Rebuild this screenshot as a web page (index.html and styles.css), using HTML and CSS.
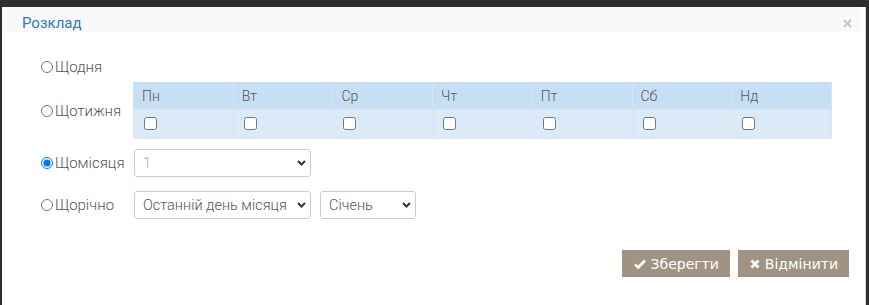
FILE: index.html
```html
<!DOCTYPE html>
<html lang="uk">
<head>
  <meta charset="UTF-8">
  <meta name="viewport" content="width=device-width, initial-scale=1.0">
  <link rel="stylesheet" href="styles.css">
</head>
<body>

  <div class="modal">
    <div class="modal-header">
      <span class="modal-title">Розклад</span>
      <svg class="close" width="9" height="9" viewBox="0 0 9 9"><path d="M1 1 L8 8 M8 1 L1 8" stroke="#c8c8c8" stroke-width="2.4"/></svg>
    </div>

    <form id="scheduleForm" class="modal-body">
      <div class="row row-daily">
        <label class="opt"><input type="radio" name="period" value="daily">Щодня</label>
      </div>

      <div class="row row-weekly">
        <label class="opt"><input type="radio" name="period" value="weekly">Щотижня</label>
        <table class="days">
          <tr>
            <th>Пн</th><th>Вт</th><th>Ср</th><th>Чт</th><th>Пт</th><th>Сб</th><th>Нд</th>
          </tr>
          <tr>
            <td><input type="checkbox"></td>
            <td><input type="checkbox"></td>
            <td><input type="checkbox"></td>
            <td><input type="checkbox"></td>
            <td><input type="checkbox"></td>
            <td><input type="checkbox"></td>
            <td><input type="checkbox"></td>
          </tr>
        </table>
      </div>

      <div class="row row-monthly">
        <label class="opt"><input type="radio" name="period" value="monthly" checked>Щомісяця</label>
        <span class="sel-wrap sel-day">
          <select class="sel muted">
            <option>1</option>
          </select>
          <svg class="chev" width="9" height="6" viewBox="0 0 9 6"><path d="M1 1 L4.5 4.5 L8 1" fill="none" stroke="#333" stroke-width="2"/></svg>
        </span>
      </div>

      <div class="row row-yearly">
        <label class="opt"><input type="radio" name="period" value="yearly">Щорічно</label>
        <span class="sel-wrap sel-day">
          <select class="sel">
            <option>Останній день місяця</option>
          </select>
          <svg class="chev" width="9" height="6" viewBox="0 0 9 6"><path d="M1 1 L4.5 4.5 L8 1" fill="none" stroke="#333" stroke-width="2"/></svg>
        </span>
        <span class="sel-wrap sel-month">
          <select class="sel">
            <option>Січень</option>
          </select>
          <svg class="chev" width="9" height="6" viewBox="0 0 9 6"><path d="M1 1 L4.5 4.5 L8 1" fill="none" stroke="#333" stroke-width="2"/></svg>
        </span>
      </div>

      <div class="footer">
        <button type="button" class="btn">
          <svg class="ico" width="12" height="10" viewBox="0 0 12 10"><path d="M1 5.5 L4.3 8.5 L11 1.5" fill="none" stroke="#fff" stroke-width="2.6"/></svg>Зберегти
        </button>
        <button type="button" class="btn">
          <svg class="ico" width="10" height="10" viewBox="0 0 10 10"><path d="M1.5 1.5 L8.5 8.5 M8.5 1.5 L1.5 8.5" stroke="#fff" stroke-width="2.6"/></svg>Відмінити
        </button>
      </div>
    </form>
  </div>

</body>
</html>
```

FILE: styles.css
```css
html, body {
  margin: 0;
  height: 305px;
}

body {
  background-color: #2d2d2d;
  padding: 2px 3px 3px 2px;
  box-sizing: border-box;
  font-family: Roboto, "Liberation Sans", sans-serif;
  color: #555;
}

.modal {
  background-color: #fff;
  height: 100%;
  border-right: 1px solid #d6d6d6;
}

.modal-header {
  margin: 5px 5px 0 5px;
  height: 18px;
  padding: 7px 15px 0 15px;
  background-color: #f9f9f9;
  display: flex;
  justify-content: space-between;
  align-items: center;
}

.modal-title {
  font-size: 15px;
  color: #337ab7;
}

.close {
  margin-right: -7px;
  margin-top: 1px;
}

.modal-body {
  padding: 23px 16px 0 36px;
}

.row {
  display: flex;
  align-items: center;
}

.row-daily {
  height: 24px;
  margin-bottom: 3px;
}

.row-weekly {
  margin-bottom: 10px;
}

.row-monthly {
  margin-bottom: 14px;
}

.opt {
  width: 95px;
  display: flex;
  align-items: center;
  font-size: 15px;
  font-weight: 300;
  color: #555;
}

.opt input {
  width: 12px;
  height: 12px;
  margin: 0 2px 0 3px;
}

.days {
  width: 699px;
  border-collapse: collapse;
  table-layout: fixed;
}

.days th {
  background-color: #c6dff5;
  height: 27px;
  padding: 0 8px;
  text-align: left;
  font-weight: 300;
  font-size: 14px;
  color: #555;
  border-left: 1px solid #d7e4ef;
  border-right: 1px solid #d7e4ef;
}

.days td {
  background-color: #dbeaf9;
  height: 28px;
  padding: 0 0 0 10px;
  border: 1px solid #dde3e9;
}

.days input {
  margin: 3px 0 0 0;
  width: 13px;
  height: 13px;
}

.sel-wrap {
  position: relative;
  display: flex;
  margin-left: 1px;
}

.sel-day {
  width: 177px;
}

.sel-month {
  width: 96px;
  margin-left: 9px;
}

.sel {
  -webkit-appearance: none;
  appearance: none;
  width: 100%;
  height: 28px;
  border: 1px solid #ccc;
  border-radius: 3px;
  background-color: #fff;
  font-family: Roboto, "Liberation Sans", sans-serif;
  font-size: 14.5px;
  font-weight: 300;
  color: #555;
  padding: 0 4px 0 8px;
}

.chev {
  position: absolute;
  right: 5px;
  top: 11px;
  pointer-events: none;
}

.muted {
  color: #aaa;
}

.footer {
  display: flex;
  justify-content: flex-end;
  gap: 8px;
  margin-top: 31px;
}

.btn {
  display: flex;
  align-items: center;
  background-color: #a09383;
  color: #fff;
  height: 27px;
  padding: 0 11px 0 12px;
  border: none;
  border-radius: 0;
  font-family: "DejaVu Sans", Verdana, sans-serif;
  font-size: 14px;
  cursor: pointer;
}

.btn:hover {
  background-color: #948676;
}

.ico {
  margin-right: 5px;
}
```
